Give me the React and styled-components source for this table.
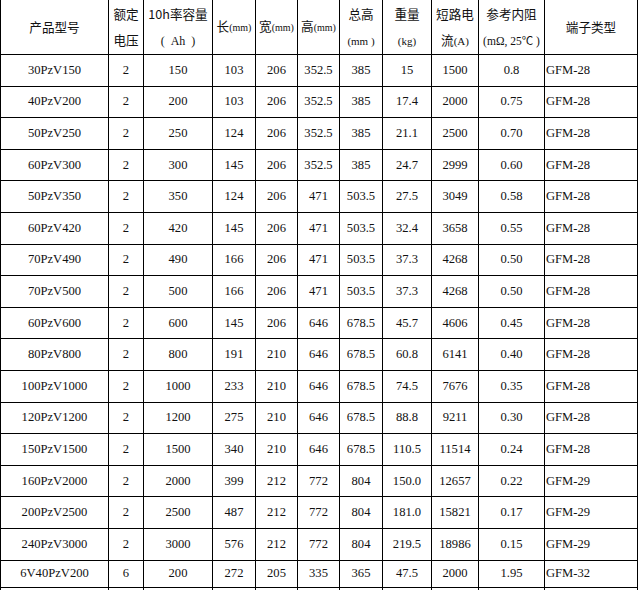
import React from "react";
import styled, { createGlobalStyle } from "styled-components";

const GlobalStyle = createGlobalStyle`
  body {
    margin: 0;
    background: #fff;
    font-family: "Liberation Serif", "Noto Sans CJK SC", serif;
    color: #111;
  }
`;

const Page = styled.div`
  width: 640px;
  height: 590px;
  overflow: hidden;
`;

const Table = styled.table`
  border-collapse: collapse;
  table-layout: fixed;
  width: 637px;
  margin-top: -1px;
  font-size: 12.6px;
`;

const HeadRow = styled.tr`
  height: 55px;
`;

const Row = styled.tr`
  height: ${({ $h }) => $h || 31.6}px;
`;

const Th = styled.td`
  border: 1px solid #000;
  padding: 0;
  text-align: center;
  vertical-align: middle;
  line-height: 26px;
  font-family: "Noto Sans CJK SC", "Liberation Serif", serif;
  font-size: 12.6px;
  white-space: nowrap;
`;

const Unit = styled.span`
  font-family: "Liberation Serif", "Noto Sans CJK SC", serif;
  font-size: ${({ $size }) => $size || 10}px;
  white-space: pre;
`;

const Td = styled.td`
  border: 1px solid #000;
  padding: ${({ $left }) => ($left ? "0 0 0 1px" : "0")};
  text-align: ${({ $left }) => ($left ? "left" : "center")};
  vertical-align: middle;
  white-space: nowrap;
  overflow: hidden;
`;

const widths = [108, 35, 69, 43, 42, 42, 43, 49, 47, 66, 93];

const rows = [
  ["30PzV150", "2", "150", "103", "206", "352.5", "385", "15", "1500", "0.8", "GFM-28"],
  ["40PzV200", "2", "200", "103", "206", "352.5", "385", "17.4", "2000", "0.75", "GFM-28"],
  ["50PzV250", "2", "250", "124", "206", "352.5", "385", "21.1", "2500", "0.70", "GFM-28"],
  ["60PzV300", "2", "300", "145", "206", "352.5", "385", "24.7", "2999", "0.60", "GFM-28"],
  ["50PzV350", "2", "350", "124", "206", "471", "503.5", "27.5", "3049", "0.58", "GFM-28"],
  ["60PzV420", "2", "420", "145", "206", "471", "503.5", "32.4", "3658", "0.55", "GFM-28"],
  ["70PzV490", "2", "490", "166", "206", "471", "503.5", "37.3", "4268", "0.50", "GFM-28"],
  ["70PzV500", "2", "500", "166", "206", "471", "503.5", "37.3", "4268", "0.50", "GFM-28"],
  ["60PzV600", "2", "600", "145", "206", "646", "678.5", "45.7", "4606", "0.45", "GFM-28"],
  ["80PzV800", "2", "800", "191", "210", "646", "678.5", "60.8", "6141", "0.40", "GFM-28"],
  ["100PzV1000", "2", "1000", "233", "210", "646", "678.5", "74.5", "7676", "0.35", "GFM-28"],
  ["120PzV1200", "2", "1200", "275", "210", "646", "678.5", "88.8", "9211", "0.30", "GFM-28"],
  ["150PzV1500", "2", "1500", "340", "210", "646", "678.5", "110.5", "11514", "0.24", "GFM-28"],
  ["160PzV2000", "2", "2000", "399", "212", "772", "804", "150.0", "12657", "0.22", "GFM-29"],
  ["200PzV2500", "2", "2500", "487", "212", "772", "804", "181.0", "15821", "0.17", "GFM-29"],
  ["240PzV3000", "2", "3000", "576", "212", "772", "804", "219.5", "18986", "0.15", "GFM-29"],
  ["6V40PzV200", "6", "200", "272", "205", "335", "365", "47.5", "2000", "1.95", "GFM-32"],
];

export default function App() {
  return (
    <Page>
      <GlobalStyle />
      <Table>
        <colgroup>
          {widths.map((w, i) => (
            <col key={i} style={{ width: w }} />
          ))}
        </colgroup>
        <tbody>
          <HeadRow>
            <Th>产品型号</Th>
            <Th>
              额定
              <br />
              电压
            </Th>
            <Th>
              10h率容量
              <br />
              <Unit $size={12}>(  Ah  )</Unit>
            </Th>
            <Th>
              长<Unit>(mm)</Unit>
            </Th>
            <Th>
              宽<Unit>(mm)</Unit>
            </Th>
            <Th>
              高<Unit>(mm)</Unit>
            </Th>
            <Th>
              总高
              <br />
              <Unit $size={11}>(mm )</Unit>
            </Th>
            <Th>
              重量
              <br />
              <Unit $size={11}>(kg)</Unit>
            </Th>
            <Th>
              短路电
              <br />
              流<Unit $size={11}>(A)</Unit>
            </Th>
            <Th>
              参考内阻
              <br />
              <Unit $size={11.5}>(mΩ, 25℃ )</Unit>
            </Th>
            <Th>端子类型</Th>
          </HeadRow>
          {rows.map((r, i) => (
            <Row key={i} $h={i === rows.length - 1 ? 27 : 31.6}>
              {r.map((c, j) => (
                <Td key={j} $left={j === r.length - 1}>
                  {c}
                </Td>
              ))}
            </Row>
          ))}
          <Row>
            {widths.map((w, j) => (
              <Td key={j}>&nbsp;</Td>
            ))}
          </Row>
        </tbody>
      </Table>
    </Page>
  );
}
